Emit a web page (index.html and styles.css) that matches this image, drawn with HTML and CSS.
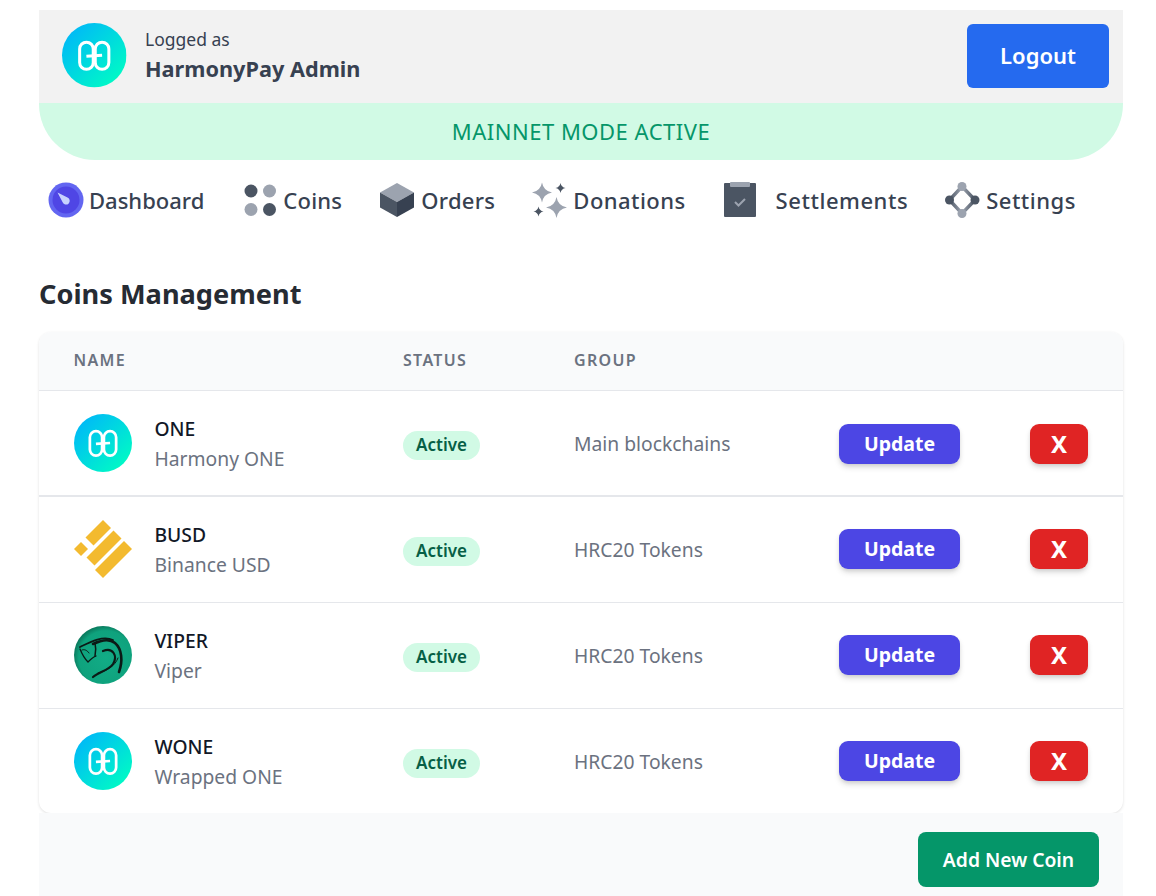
FILE: index.html
```html
<!DOCTYPE html>
<html lang="en">
<head>
    <meta charset="UTF-8">
    <meta name="viewport" content="width=device-width, initial-scale=1.0">
    <title>HarmonyPay Admin</title>
    <link rel="stylesheet" href="styles.css">
</head>
<body>
    <svg class="defs" width="0" height="0">
        <defs>
            <linearGradient id="oneGrad" x1="0.1" y1="0.1" x2="0.9" y2="0.9">
                <stop offset="0" stop-color="#00b8f8"/>
                <stop offset="1" stop-color="#00fcc4"/>
            </linearGradient>
            <radialGradient id="viperGrad" cx="0.55" cy="0.55" r="0.55">
                <stop offset="0" stop-color="#12ac86"/>
                <stop offset="0.85" stop-color="#0fa27d"/>
                <stop offset="1" stop-color="#0b7d60"/>
            </radialGradient>
            <linearGradient id="settingsGrad" gradientUnits="userSpaceOnUse" x1="4" y1="0" x2="30" y2="0">
                <stop offset="0" stop-color="#4b5563"/>
                <stop offset="0.5" stop-color="#9ca3af"/>
                <stop offset="1" stop-color="#4b5563"/>
            </linearGradient>
            <symbol id="oneLogo" viewBox="0 0 64 64">
                <circle cx="32" cy="32" r="32" fill="url(#oneGrad)"/>
                <g fill="none" stroke="#fff" stroke-width="3">
                    <rect x="17.500" y="19" width="13.500" height="27" rx="6.750"/>
                    <rect x="33" y="19" width="13.500" height="27" rx="6.750"/>
                    <path d="M24.200 33L39.800 32"/>
                </g>
            </symbol>
        </defs>
    </svg>

    <div class="page">
        <header class="topbar">
            <div class="user">
                <svg class="user-logo"><use href="#oneLogo"/></svg>
                <div class="user-text">
                    <div class="logged">Logged as</div>
                    <div class="admin">HarmonyPay Admin</div>
                </div>
            </div>
            <button class="logout">Logout</button>
        </header>
        <div class="mode">MAINNET MODE ACTIVE</div>

        <nav class="nav">
            <a class="nav-item dash">
                <svg width="36" height="36" viewBox="0 0 36 36">
                    <circle cx="18" cy="18" r="17.500" fill="#6366f1"/>
                    <circle cx="18" cy="18" r="13.500" fill="#4f46e5"/>
                    <path d="M9.500 10.500L19.500 15.500a3.700 3.700 0 1 1-5 4.500z" fill="#c7d2fe"/>
                </svg>
                <span>Dashboard</span>
            </a>
            <a class="nav-item coins">
                <svg width="32" height="32" viewBox="0 0 32 32">
                    <circle cx="7" cy="7" r="6.500" fill="#4b5563"/>
                    <circle cx="25.500" cy="7" r="6.500" fill="#9ca3af"/>
                    <circle cx="7" cy="25.500" r="6.500" fill="#9ca3af"/>
                    <circle cx="25.500" cy="25.500" r="6.500" fill="#4b5563"/>
                </svg>
                <span>Coins</span>
            </a>
            <a class="nav-item orders">
                <svg width="36" height="36" viewBox="0 0 36 36">
                    <path d="M18 1l17 9.500L18 20 1 10.500z" fill="#9ca3af"/>
                    <path d="M1 10.500L18 20v15L1 25.500z" fill="#4b5563"/>
                    <path d="M35 10.500L18 20v15l17-9.500z" fill="#374151"/>
                </svg>
                <span>Orders</span>
            </a>
            <a class="nav-item donations">
                <svg width="36" height="36" viewBox="0 0 36 36">
                    <path d="M10 .500Q11.500 9 20 10.500 11.500 12 10 20.500 8.500 12 0 10.500 8.500 9 10 .500z" fill="#9ca3af"/>
                    <path d="M24.500 15Q26 24 35 25.500 26 27 24.500 36 23 27 14 25.500 23 24 24.500 15z" fill="#9ca3af"/>
                    <path d="M28.500 1Q29.300 5.200 33.500 6 29.300 6.800 28.500 11 27.700 6.800 23.500 6 27.700 5.200 28.500 1z" fill="#4b5563"/>
                    <path d="M6.500 24.500Q7.300 28.700 11.500 29.500 7.300 30.300 6.500 34.500 5.700 30.300 1.500 29.500 5.700 28.700 6.500 24.500z" fill="#4b5563"/>
                </svg>
                <span>Donations</span>
            </a>
            <a class="nav-item settlements">
                <svg width="32" height="36" viewBox="0 0 32 36">
                    <rect x="0" y="1" width="32" height="34" rx="1" fill="#4b5563"/>
                    <rect x="6" y="0" width="20" height="5" rx="1" fill="#9ca3af"/>
                    <path d="M11 20l3.500 3.500L21 17" fill="none" stroke="#9ca3af" stroke-width="2"/>
                </svg>
                <span>Settlements</span>
            </a>
            <a class="nav-item settings">
                <svg width="36" height="36" viewBox="0 0 36 36">
                    <path d="M17 4.500L30 18 17 31.500 4.500 18z" fill="none" stroke="url(#settingsGrad)" stroke-width="3.500"/>
                    <circle cx="17" cy="4.500" r="4.500" fill="#9ca3af"/>
                    <circle cx="17" cy="31.500" r="4.500" fill="#9ca3af"/>
                    <circle cx="4.500" cy="18" r="4.500" fill="#4b5563"/>
                    <circle cx="30" cy="18" r="4.500" fill="#4b5563"/>
                </svg>
                <span>Settings</span>
            </a>
        </nav>

        <h2 class="title">Coins Management</h2>

        <div class="card">
            <table class="coins-table">
                <thead>
                    <tr>
                        <th class="col-name">Name</th>
                        <th class="col-status">Status</th>
                        <th class="col-group">Group</th>
                        <th class="col-update"></th>
                        <th class="col-delete"></th>
                    </tr>
                </thead>
                <tbody>
                    <tr class="first">
                        <td>
                            <div class="coin">
                                <svg class="coin-logo"><use href="#oneLogo"/></svg>
                                <div>
                                    <div class="symbol">ONE</div>
                                    <div class="coin-name">Harmony ONE</div>
                                </div>
                            </div>
                        </td>
                        <td><span class="badge">Active</span></td>
                        <td class="group">Main blockchains</td>
                        <td><button class="btn-update">Update</button></td>
                        <td><button class="btn-delete">X</button></td>
                    </tr>
                    <tr>
                        <td>
                            <div class="coin">
                                <svg class="coin-logo" viewBox="0 0 58 58">
                                    <g fill="#f3ba2f">
                                        <path d="M29 0l8 8-17.500 17.500-8-8z"/>
                                        <path d="M39.500 10.500l8 8-27 27-8-8z"/>
                                        <path d="M50 21l8 8-29 29-8-8z"/>
                                        <path d="M0 29l7-7 7 7-7 7z"/>
                                    </g>
                                </svg>
                                <div>
                                    <div class="symbol">BUSD</div>
                                    <div class="coin-name">Binance USD</div>
                                </div>
                            </div>
                        </td>
                        <td><span class="badge">Active</span></td>
                        <td class="group">HRC20 Tokens</td>
                        <td><button class="btn-update">Update</button></td>
                        <td><button class="btn-delete">X</button></td>
                    </tr>
                    <tr>
                        <td>
                            <div class="coin">
                                <svg class="coin-logo" viewBox="0 0 58 58">
                                    <circle cx="29" cy="29" r="29" fill="url(#viperGrad)"/>
                                    <g fill="none" stroke="#0b1a16" stroke-linecap="round">
                                        <path d="M6 21C16 16 29 9 39 14" stroke-width="1.800"/>
                                        <path d="M19 18C30 13 36 13 41 17 48 23 49 35 45 46" stroke-width="2.600"/>
                                        <path d="M6 23C8 28 11 33 14 36 17 33 19 31 22 30" stroke-width="1.300"/>
                                        <path d="M8 24C10 23 13 24 15 27" stroke-width="1"/>
                                        <path d="M21 17C22 21 22 25 21 30" stroke-width="1.500"/>
                                        <path d="M29 25C39 21 44 30 39 38 35 44 25 46 19 51" stroke-width="2.200"/>
                                        <path d="M24 47C33 45 41 40 44 32" stroke-width="1"/>
                                    </g>
                                </svg>
                                <div>
                                    <div class="symbol">VIPER</div>
                                    <div class="coin-name">Viper</div>
                                </div>
                            </div>
                        </td>
                        <td><span class="badge">Active</span></td>
                        <td class="group">HRC20 Tokens</td>
                        <td><button class="btn-update">Update</button></td>
                        <td><button class="btn-delete">X</button></td>
                    </tr>
                    <tr>
                        <td>
                            <div class="coin">
                                <svg class="coin-logo"><use href="#oneLogo"/></svg>
                                <div>
                                    <div class="symbol">WONE</div>
                                    <div class="coin-name">Wrapped ONE</div>
                                </div>
                            </div>
                        </td>
                        <td><span class="badge">Active</span></td>
                        <td class="group">HRC20 Tokens</td>
                        <td><button class="btn-update">Update</button></td>
                        <td><button class="btn-delete">X</button></td>
                    </tr>
                </tbody>
            </table>
        </div>
        <div class="actions">
            <button class="btn-add">Add New Coin</button>
        </div>
    </div>
</body>
</html>
```

FILE: styles.css
```css
* {
    box-sizing: border-box;
}
html, body {
    height: 100%;
}
body {
    margin: 0;
    background-color: #fff;
    font-family: "Noto Sans", "Open Sans", sans-serif;
    color: #1f2937;
    overflow: hidden;
}
button {
    border: none;
    font-family: inherit;
}
.defs {
    position: absolute;
}
.page {
    width: 1084px;
    margin-left: 39px;
    padding-top: 10px;
}
.topbar {
    height: 93px;
    background-color: #f2f2f2;
    display: flex;
    justify-content: space-between;
    align-items: center;
    padding: 0 14px 2px 23px;
}
.user {
    display: flex;
    align-items: center;
    gap: 18.5px;
}
.user-logo {
    width: 64.500px;
    height: 64.500px;
}
.user-text {
    padding-top: 2px;
}
.logged {
    font-size: 17.500px;
    line-height: 24px;
    color: #374151;
}
.admin {
    font-size: 21.700px;
    line-height: 35px;
    font-weight: 700;
    color: #374151;
}
.logout {
    width: 142px;
    height: 64px;
    padding-bottom: 2px;
    background-color: #256aef;
    color: #fff;
    font-size: 22px;
    font-weight: 600;
    border-radius: 6px;
}
.mode {
    height: 57px;
    line-height: 56px;
    text-align: center;
    background-color: #d1fae5;
    color: #059669;
    font-size: 22px;
    letter-spacing: 0.5px;
    border-radius: 0 0 56px 56px;
}
.nav {
    display: flex;
    align-items: center;
    height: 82px;
    padding-left: 9px;
    padding-bottom: 2px;
}
.nav-item {
    display: flex;
    align-items: center;
    font-size: 22px;
    color: #374151;
    font-weight: 500;
}
.dash svg { margin-right: 5px; }
.coins { margin-left: 40px; letter-spacing: 0.2px; }
.coins svg { margin-right: 7px; }
.orders { margin-left: 37px; letter-spacing: 0.3px; }
.orders svg { margin-right: 6px; }
.donations { margin-left: 37px; letter-spacing: 0.45px; }
.donations svg { margin-right: 5px; }
.settlements { margin-left: 38px; letter-spacing: 0.55px; }
.settlements svg { margin-right: 20px; }
.settings { margin-left: 37px; letter-spacing: 0.5px; }
.settings svg { margin-right: 5px; }
.title {
    margin: 34px 0 20px;
    font-size: 27.200px;
    line-height: 36px;
    font-weight: 700;
    color: #262b33;
}
.card {
    background-color: #fff;
    border-radius: 12px;
    box-shadow: 0 1px 3px rgba(0, 0, 0, 0.12);
    overflow: hidden;
}
.coins-table {
    width: 100%;
    border-collapse: collapse;
    table-layout: fixed;
}
.col-name { width: 364px; }
.col-status { width: 171px; }
.col-group { width: 264px; }
.col-update { width: 192px; }
th {
    height: 58px;
    padding: 0 0 2px 34.500px;
    background-color: #f9fafb;
    border-bottom: 1px solid #e5e7eb;
    text-align: left;
    font-size: 16px;
    font-weight: 600;
    letter-spacing: 1.300px;
    text-transform: uppercase;
    color: #6b7280;
}
th.col-status, th.col-group {
    padding-left: 0;
}
td {
    height: 106px;
    padding: 0;
    border-bottom: 1px solid #e5e7eb;
    font-size: 19px;
}
tr:last-child td {
    height: 105px;
    border-bottom: none;
}
tr.first td {
    border-bottom-width: 2px;
}
.coin {
    display: flex;
    align-items: center;
    gap: 22.500px;
    padding-left: 35px;
}
.coin-logo {
    width: 58px;
    height: 58px;
    flex-shrink: 0;
}
.symbol {
    padding-top: 1px;
    font-size: 19.300px;
    line-height: 30px;
    color: #111827;
    font-weight: 500;
}
.coin-name {
    font-size: 19.300px;
    line-height: 29px;
    color: #6b7280;
}
.badge {
    display: block;
    width: 77px;
    height: 29px;
    margin-top: 5px;
    line-height: 28px;
    text-align: center;
    background-color: #d1fae5;
    color: #065f46;
    border-radius: 15px;
    font-size: 17px;
    font-weight: 600;
}
.group {
    padding-top: 1px;
    font-size: 19.300px;
    color: #6b7280;
}
.btn-update, .btn-delete {
    display: block;
    height: 40px;
    padding: 0 0 1px;
    color: #fff;
    border-radius: 9px;
    box-shadow: 0 4px 6px -1px rgba(0, 0, 0, 0.15), 0 2px 4px -1px rgba(0, 0, 0, 0.1);
}
.first .btn-update, .first .btn-delete {
    margin-top: 2px;
}
.btn-update {
    width: 121px;
    margin-left: 1px;
    background-color: #4c46e4;
    font-size: 19.500px;
    font-weight: 700;
}
.btn-delete {
    width: 58px;
    background-color: #e02424;
    font-size: 24px;
    font-weight: 700;
}
.actions {
    height: 84px;
    display: flex;
    justify-content: flex-end;
    padding: 19px 24px 0 0;
    background-color: #f9fafb;
}
.btn-add {
    width: 181px;
    height: 55px;
    padding: 0;
    background-color: #059669;
    color: #fff;
    font-size: 19.300px;
    font-weight: 600;
    border-radius: 8px;
}
```
